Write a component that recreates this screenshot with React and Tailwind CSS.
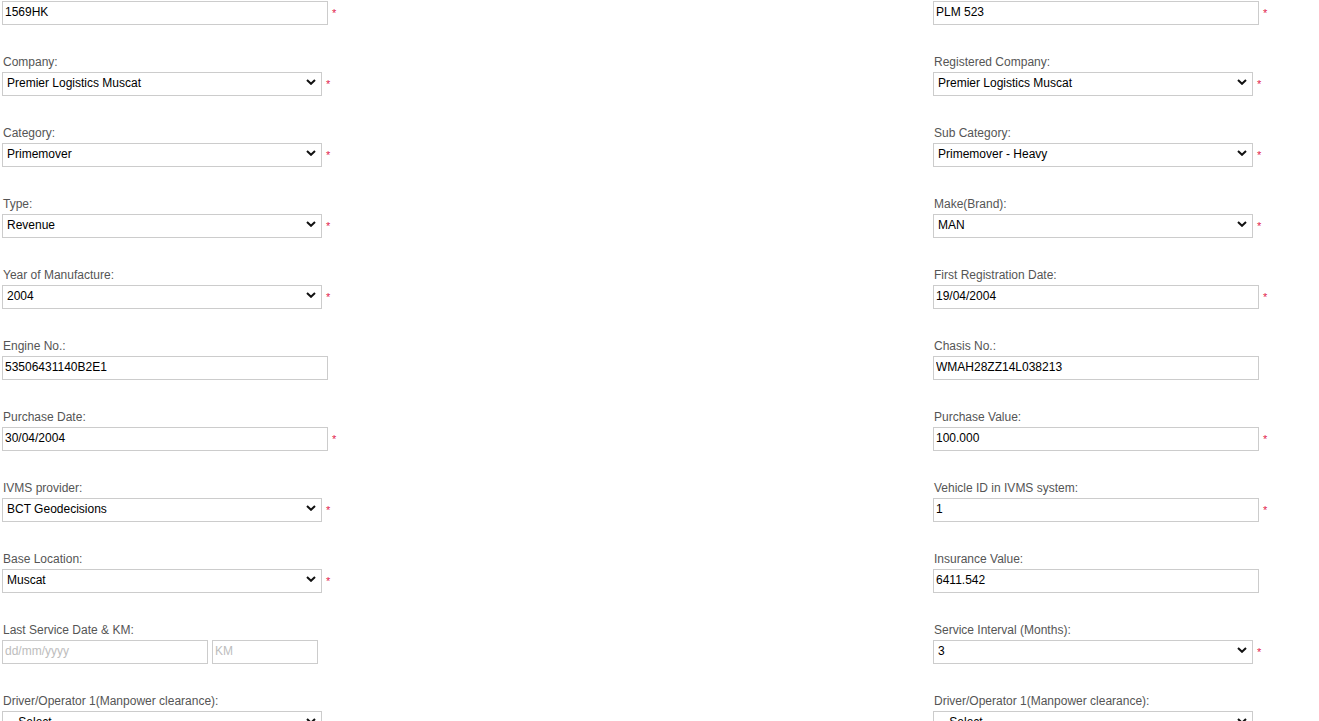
import React from 'react';

const rows = [
  [
    { type: 'input', value: '1569HK', req: true },
    { type: 'input', value: 'PLM 523', req: true },
  ],
  [
    { label: 'Company:', type: 'select', value: 'Premier Logistics Muscat', req: true },
    { label: 'Registered Company:', type: 'select', value: 'Premier Logistics Muscat', req: true },
  ],
  [
    { label: 'Category:', type: 'select', value: 'Primemover', req: true },
    { label: 'Sub Category:', type: 'select', value: 'Primemover - Heavy', req: true },
  ],
  [
    { label: 'Type:', type: 'select', value: 'Revenue', req: true },
    { label: 'Make(Brand):', type: 'select', value: 'MAN', req: true },
  ],
  [
    { label: 'Year of Manufacture:', type: 'select', value: '2004', req: true },
    { label: 'First Registration Date:', type: 'input', value: '19/04/2004', req: true },
  ],
  [
    { label: 'Engine No.:', type: 'input', value: '53506431140B2E1' },
    { label: 'Chasis No.:', type: 'input', value: 'WMAH28ZZ14L038213' },
  ],
  [
    { label: 'Purchase Date:', type: 'input', value: '30/04/2004', req: true },
    { label: 'Purchase Value:', type: 'input', value: '100.000', req: true },
  ],
  [
    { label: 'IVMS provider:', type: 'select', value: 'BCT Geodecisions', req: true },
    { label: 'Vehicle ID in IVMS system:', type: 'input', value: '1', req: true },
  ],
  [
    { label: 'Base Location:', type: 'select', value: 'Muscat', req: true },
    { label: 'Insurance Value:', type: 'input', value: '6411.542' },
  ],
  [
    { label: 'Last Service Date & KM:', type: 'service' },
    { label: 'Service Interval (Months):', type: 'select', value: '3', req: true },
  ],
  [
    { label: 'Driver/Operator 1(Manpower clearance):', type: 'select', value: '-- Select --' },
    { label: 'Driver/Operator 1(Manpower clearance):', type: 'select', value: '-- Select --' },
  ],
];

function Select({ value }) {
  return (
    <div className="relative w-[320px] h-[24px]">
      <select
        defaultValue={value}
        className="appearance-none block w-full h-[24px] border border-[#cccccc] bg-white pl-[4px] pr-[20px] pb-[3px] text-[12px] leading-[14px] text-black outline-none"
      >
        <option>{value}</option>
      </select>
      <svg
        className="pointer-events-none absolute right-[6px] top-[7px]"
        width="10"
        height="6"
        viewBox="0 0 10 6"
        fill="none"
      >
        <path d="M1 1l4 3.8L9 1" stroke="#111" strokeWidth="2" />
      </svg>
    </div>
  );
}

function Input({ value, placeholder, width = 'w-[326px]' }) {
  return (
    <input
      type="text"
      defaultValue={value}
      placeholder={placeholder}
      className={`${width} block h-[24px] border border-[#cccccc] bg-white px-[2px] pb-[2px] text-[12px] leading-[14px] text-black outline-none placeholder:text-[#bdbdbd]`}
    />
  );
}

function Field({ f }) {
  return (
    <div>
      {f.label && (
        <div className="h-[14px] mb-[3px] pl-[1px] text-[12px] leading-[14px] text-[#555555] whitespace-nowrap">
          {f.label}
        </div>
      )}
      <div className="flex items-start">
        {f.type === 'select' && <Select value={f.value} />}
        {f.type === 'input' && <Input value={f.value} />}
        {f.type === 'service' && (
          <div className="flex gap-[4px]">
            <Input placeholder="dd/mm/yyyy" width="w-[206px]" />
            <Input placeholder="KM" width="w-[106px]" />
          </div>
        )}
        {f.req && (
          <span className="ml-[4px] h-[24px] text-[11px] leading-[24px] text-[#e2234d]">*</span>
        )}
      </div>
    </div>
  );
}

export default function App() {
  return (
    <div className="min-h-screen bg-white pt-[1px] pl-[2px] font-['Liberation_Sans',Arial,sans-serif]">
      <div className="flex flex-col gap-[30px] pb-[30px]">
        {rows.map((r, i) => (
          <div key={i} className="grid grid-cols-[931px_1fr]">
            <Field f={r[0]} />
            <Field f={r[1]} />
          </div>
        ))}
      </div>
    </div>
  );
}
